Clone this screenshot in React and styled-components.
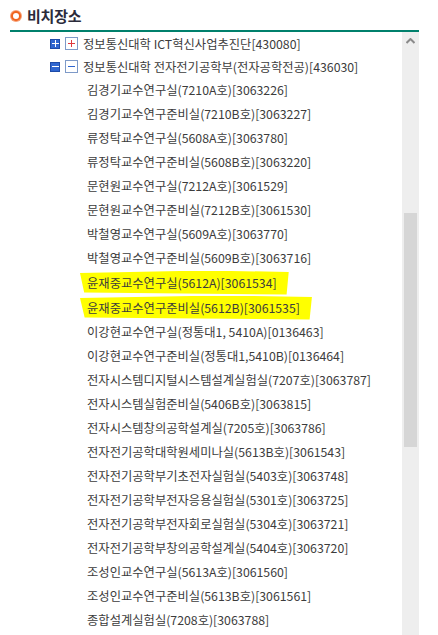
import styled, { createGlobalStyle } from 'styled-components';

const GlobalStyle = createGlobalStyle`
    body {
        margin: 0;
        background: #FFFFFF;
        font-family: "Noto Sans CJK KR", "Noto Sans", sans-serif;
    }
`;

const Page = styled.div`
    width: 438px;
    height: 635px;
    padding-left: 10px;
    box-sizing: border-box;
    overflow: hidden;
`;

const Header = styled.div`
    width: 409px;
    height: 30px;
    display: flex;
    align-items: center;
    gap: 6px;
    border-bottom: 2px solid #00806C;
`;

const Dot = styled.span`
    width: 6px;
    height: 6px;
    border: 2px solid #F0641E;
    border-radius: 50%;
    background: #FFFFFF;
    box-shadow: 0 0 0 1px #F7A27A;
    margin: 2px 0 0 1px;
`;

const Title = styled.h2`
    margin: 0;
    font-size: 15px;
    font-weight: 700;
    color: #2B2B3A;
    letter-spacing: -0.2px;
`;

const Body = styled.div`
    display: flex;
    width: 409px;
`;

const Tree = styled.ul`
    flex: 1;
    list-style: none;
    margin: 0;
    padding: 0;
`;

const Row = styled.li`
    display: flex;
    align-items: center;
    height: ${p => p.$h || 24}px;
    padding-left: ${p => (p.$child ? 77 : 40)}px;
    font-size: 12.3px;
    color: #3C3C3C;
    white-space: nowrap;
`;

const Expander = styled.span`
    width: 10px;
    height: 10px;
    background: #2F66D0;
    border: 1px solid #1D4BA8;
    box-sizing: border-box;
    display: flex;
    align-items: center;
    justify-content: center;
    margin-right: 5px;
`;

const Toggle = styled.span`
    width: 13px;
    height: 13px;
    border: 1px solid #7E9AC8;
    box-sizing: border-box;
    background: #FFFFFF;
    display: flex;
    align-items: center;
    justify-content: center;
    margin-right: 5px;
`;

const Highlight = styled.span`
    background: #FFFF00;
    padding: 3px 12px 3px 7px;
    margin-left: -7px;
    clip-path: polygon(0 10%, 60% 0, 100% 6%, 99% 100%, 2% 92%);
`;

const Scrollbar = styled.div`
    width: 17px;
    height: 603px;
    background: #EEEEEE;
    display: flex;
    flex-direction: column;
    align-items: center;
`;

const Arrow = styled.div`
    height: 17px;
    display: flex;
    align-items: center;
`;

const Thumb = styled.div`
    width: 13px;
    height: 234px;
    margin-top: 164px;
    background: #D6D6D6;
`;

function Sign({ minus, color }) {
    return (
        <svg width="7" height="7" viewBox="0 0 7 7">
            <rect x="0" y="3" width="7" height="1" fill={color} />
            {!minus && <rect x="3" y="0" width="1" height="7" fill={color} />}
        </svg>
    );
}

const rooms = [
    '김경기교수연구실(7210A호)[3063226]',
    '김경기교수연구준비실(7210B호)[3063227]',
    '류정탁교수연구실(5608A호)[3063780]',
    '류정탁교수연구준비실(5608B호)[3063220]',
    '문현원교수연구실(7212A호)[3061529]',
    '문현원교수연구준비실(7212B호)[3061530]',
    '박철영교수연구실(5609A호)[3063770]',
    '박철영교수연구준비실(5609B호)[3063716]',
    { text: '윤재중교수연구실(5612A)[3061534]', mark: true },
    { text: '윤재중교수연구준비실(5612B)[3061535]', mark: true },
    '이강현교수연구실(정통대1, 5410A)[0136463]',
    '이강현교수연구준비실(정통대1,5410B)[0136464]',
    '전자시스템디지털시스템설계실험실(7207호)[3063787]',
    '전자시스템실험준비실(5406B호)[3063815]',
    '전자시스템창의공학설계실(7205호)[3063786]',
    '전자전기공학대학원세미나실(5613B호)[3061543]',
    '전자전기공학부기초전자실험실(5403호)[3063748]',
    '전자전기공학부전자응용실험실(5301호)[3063725]',
    '전자전기공학부전자회로실험실(5304호)[3063721]',
    '전자전기공학부창의공학설계실(5404호)[3063720]',
    '조성인교수연구실(5613A호)[3061560]',
    '조성인교수연구준비실(5613B호)[3061561]',
    '종합설계실험실(7208호)[3063788]',
];

export default function App() {
    return (
        <Page>
            <GlobalStyle />
            <Header>
                <Dot />
                <Title>비치장소</Title>
            </Header>
            <Body>
                <Tree>
                    <Row $h={23}>
                        <Expander><Sign color="#FFFFFF" /></Expander>
                        <Toggle><Sign color="#E0393E" /></Toggle>
                        정보통신대학 ICT혁신사업추진단[430080]
                    </Row>
                    <Row $h={23}>
                        <Expander><Sign minus color="#FFFFFF" /></Expander>
                        <Toggle><Sign minus color="#2F66D0" /></Toggle>
                        정보통신대학 전자전기공학부(전자공학전공)[436030]
                    </Row>
                    {rooms.map(r => typeof r === 'string' ? (
                        <Row key={r} $child>{r}</Row>
                    ) : (
                        <Row key={r.text} $child $h={25}>
                            <Highlight>{r.text}</Highlight>
                        </Row>
                    ))}
                </Tree>
                <Scrollbar>
                    <Arrow>
                        <svg width="9" height="6" viewBox="0 0 9 6">
                            <path d="M0.5 5 L4.5 1 L8.5 5" stroke="#8A8A8A" strokeWidth="2" fill="none" />
                        </svg>
                    </Arrow>
                    <Thumb />
                </Scrollbar>
            </Body>
        </Page>
    );
}
